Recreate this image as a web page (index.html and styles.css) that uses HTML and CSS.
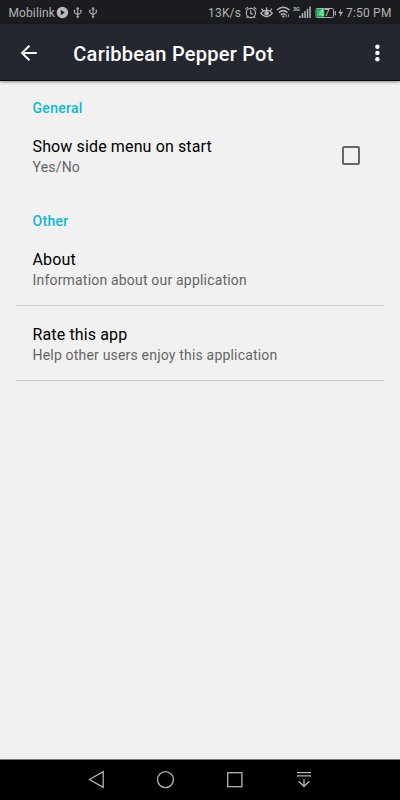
FILE: index.html
```html
<!DOCTYPE html>
<html lang="en">
<head>
<meta charset="utf-8">
<title>Caribbean Pepper Pot</title>
<link rel="stylesheet" href="styles.css">
</head>
<body>
<div class="screen">
  <div class="status">
    <span class="carrier">Mobilink</span>
    <svg class="status-left" width="44" height="24" viewBox="56 0 44 24">
      <circle cx="62.4" cy="12.5" r="5.7" fill="#b9babc"/>
      <path d="M60.8 9.8v5.4l4-2.7z" fill="#1b1c20"/>
      <g id="usb" fill="none" stroke="#a9aaad" stroke-width="1.1">
        <path d="M77.7 8.5v8M74.5 10.5v2.2l3.2 2M81 10.5v2.2l-3.3 2"/>
        <path d="M76.3 9.3l1.4-2.3 1.4 2.3zM74 10h1v1h-1zM80.5 10h1v1h-1z" fill="#a9aaad" stroke-width=".5"/>
        <circle cx="77.7" cy="16.8" r="1" fill="#a9aaad" stroke-width=".5"/>
      </g>
      <use href="#usb" x="15.3"/>
    </svg>
    <span class="speed">13K/s</span>
    <svg class="status-right" width="101" height="24" viewBox="244 0 101 24">
      <g fill="none" stroke="#b3b4b6" stroke-width="1.2">
        <circle cx="250.9" cy="13" r="4.6"/>
        <path d="M250.7 10.3v3l2.2 1.2M245.3 9.4l2.7-2.3M253.8 7.1l2.7 2.3M247.6 16.5l-1.2 1.4M254 16.5l1.2 1.4"/>
        <path d="M260.8 13.2q5.8-6 11.6 0q-5.8 7-11.6 0zM266.6 9.8V7.2M262.9 10.6l-1.6-2M270.3 10.6l1.6-2"/>
        <circle cx="266.6" cy="13.3" r="1.7" fill="#b3b4b6"/>
        <path d="M276.8 10q6.4-5.6 12.8 0M278.9 12.6q4.3-4 8.6 0M281 15q2.3-2.4 4.6 0" stroke-width="1.5"/>
        <path d="M286.2 14.4v3M288.4 14.2v3" stroke-width=".9"/>
      </g>
      <circle cx="283.3" cy="16.6" r="1.1" fill="#b3b4b6"/>
      <text class="net" x="292.8" y="11">3G</text>
      <path d="M299 15.8h1.6V18H299zM301.7 13.3h1.6V18h-1.6zM304.3 11h1.5v7h-1.5zM306.8 8.8h1.5V18h-1.5zM309.3 6.5h1.5V18h-1.5z" fill="#b3b4b6"/>
      <rect x="316" y="8.5" width="17.5" height="9" rx="1" fill="none" stroke="#a9aaad" stroke-width="1"/>
      <path d="M317 9.3h7.4v7.4H317z" fill="#0fd65a"/>
      <path d="M334.6 11h1.3v4.2h-1.3z" fill="#a9aaad"/>
      <text class="level" x="318.8" y="16.1">47</text>
      <path d="M341.3 8.3l-3 5h2.2l-1 4 3.6-5.2h-2.6z" fill="#b9babc"/>
    </svg>
    <span class="clock">7:50 PM</span>
  </div>
  <header class="bar">
    <svg class="back" width="18" height="18" viewBox="0 0 18 18"><path d="M16.8 9H2M9.4 1.8L2 9l7.4 7.2" fill="none" stroke="#fff" stroke-width="1.9"/></svg>
    <h1>Caribbean Pepper Pot</h1>
    <svg class="more" width="6" height="18" viewBox="0 0 6 18" fill="#fff"><circle cx="3.4" cy="2.7" r="2.2"/><circle cx="3.4" cy="9" r="2.2"/><circle cx="3.4" cy="15.2" r="2.2"/></svg>
  </header>
  <main>
    <h2>General</h2>
    <div class="row toggle">
      <div><div class="name">Show side menu on start</div><div class="note">Yes/No</div></div>
      <span class="box"></span>
    </div>
    <h2>Other</h2>
    <div class="row item"><div class="name">About</div><div class="note">Information about our application</div></div>
    <div class="row item"><div class="name">Rate this app</div><div class="note">Help other users enjoy this application</div></div>
  </main>
  <nav>
    <svg width="400" height="40" viewBox="0 760 400 40" fill="none" stroke="#b5b5b5" stroke-width="1.3">
      <path d="M89.4 779.5l13.8-7.9v15.8z"/>
      <circle cx="165.5" cy="779.6" r="8"/>
      <rect x="227.7" y="772.7" width="14.2" height="14"/>
      <path d="M297 772.6h14M297 775.9h14M304 779v7M298.7 781.3l5.3 5 5.3-5"/>
    </svg>
  </nav>
</div>
</body>
</html>
```
FILE: styles.css
```css
* { box-sizing: border-box; }
body { margin: 0; font-family: Roboto, sans-serif; }
.screen { width: 400px; height: 800px; display: flex; flex-direction: column; background: #f1f1f1; overflow: hidden; }
svg { display: block; flex: none; }
.status { height: 24px; display: flex; background: #1b1c20; color: #b3b4b6; font-size: 12px; line-height: 26px; padding-left: 8.5px; white-space: nowrap; }
.carrier { width: 47.5px; letter-spacing: .1px; }
.speed { width: 36px; margin-left: 108px; letter-spacing: .2px; }
.clock { margin-left: 1px; letter-spacing: .2px; }
.net { font-size: 6px; font-weight: 700; fill: #b3b4b6; letter-spacing: -.6px; }
.level { font-size: 9.5px; fill: #d5d6d7; }
.bar { height: 57px; flex: none; display: flex; align-items: center; padding: 1px 20px 0; background: #24272f; border-bottom: 1px solid #090b12; box-shadow: 0 1px 3px rgba(0,0,0,.45); color: #fff; }
h1 { margin: 2px 0 0 35.3px; font-size: 20px; line-height: 28px; font-weight: 500; letter-spacing: .25px; white-space: nowrap; }
.more { margin-left: auto; }
main { flex: 1; padding: 17px 16px 0; }
h2 { margin: 0 0 0 16.5px; font-size: 14px; line-height: 20px; font-weight: 500; letter-spacing: .3px; color: #0cb9d2; }
.row { padding: 0 16.5px; }
.toggle { display: flex; justify-content: space-between; padding-top: 18px; height: 93px; }
.name { font-size: 16px; line-height: 21px; color: #000; letter-spacing: .13px; }
.note { font-size: 14px; line-height: 20px; color: #656565; letter-spacing: .19px; }
.box { width: 18px; height: 19px; margin: 10px 7.5px 0 0; border: 2px solid #666; border-radius: 2px; }
.item { height: 75px; padding-top: 18px; border-bottom: 1px solid #cecece; }
nav { height: 41px; background: #000; border-top: 1px solid #777; }
```
